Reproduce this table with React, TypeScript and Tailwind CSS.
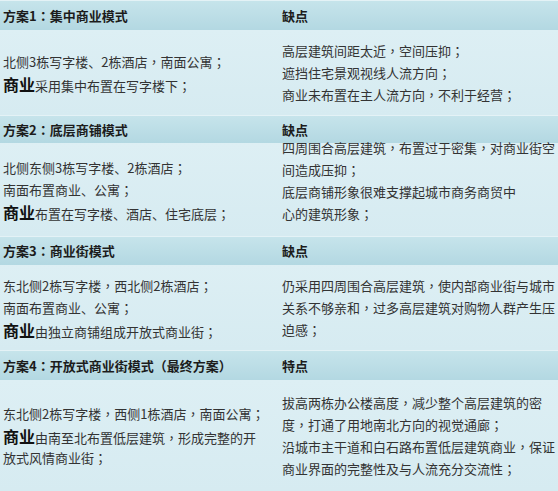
import React from "react";

const font = { fontFamily: '"Noto Sans CJK SC", "Noto Sans", sans-serif' };
const tcFont = { fontFamily: '"Noto Sans CJK TC", "Noto Sans CJK SC", sans-serif' };

function P({ s }: { s: string }) {
  const parts: React.ReactNode[] = [];
  let buf = "";
  let k = 0;
  for (const ch of s) {
    if (ch === "，" || ch === "：" || ch === "；") {
      if (buf) parts.push(buf);
      buf = "";
      parts.push(
        <span key={k++} style={tcFont}>
          {ch}
        </span>
      );
    } else buf += ch;
  }
  if (buf) parts.push(buf);
  return <>{parts}</>;
}

type Row = {
  h1: string;
  h2: string;
  hh: string;
  bh: string;
  left: React.ReactNode[];
  right: string[];
  rightTop?: boolean;
};

const B = ({ children }: { children: React.ReactNode }) => (
  <span className="text-[16px] font-bold text-[#111]">{children}</span>
);

const rows: Row[] = [
  {
    h1: "方案1：集中商业模式",
    h2: "缺点",
    hh: "h-[30px]",
    bh: "h-[85px]",
    left: [
      <P s="北侧3栋写字楼、2栋酒店，南面公寓；" />,
      <>
        <B>商业</B>
        <P s="采用集中布置在写字楼下；" />
      </>,
    ],
    right: [
      "高层建筑间距太近，空间压抑；",
      "遮挡住宅景观视线人流方向；",
      "商业未布置在主人流方向，不利于经营；",
    ],
  },
  {
    h1: "方案2：底层商铺模式",
    h2: "缺点",
    hh: "h-[28px]",
    bh: "h-[93px]",
    left: [
      <P s="北侧东侧3栋写字楼、2栋酒店；" />,
      <P s="南面布置商业、公寓；" />,
      <>
        <B>商业</B>
        <P s="布置在写字楼、酒店、住宅底层；" />
      </>,
    ],
    right: [
      "四周围合高层建筑，布置过于密集，对商业街空",
      "间造成压抑；",
      "底层商铺形象很难支撑起城市商务商贸中",
      "心的建筑形象；",
    ],
    rightTop: true,
  },
  {
    h1: "方案3：商业街模式",
    h2: "缺点",
    hh: "h-[29px]",
    bh: "h-[85px]",
    left: [
      <P s="东北侧2栋写字楼，西北侧2栋酒店；" />,
      <P s="南面布置商业、公寓；" />,
      <>
        <B>商业</B>
        <P s="由独立商铺组成开放式商业街；" />
      </>,
    ],
    right: [
      "仍采用四周围合高层建筑，使内部商业街与城市",
      "关系不够亲和，过多高层建筑对购物人群产生压",
      "迫感；",
    ],
  },
  {
    h1: "方案4：开放式商业街模式（最终方案）",
    h2: "特点",
    hh: "h-[30px]",
    bh: "h-[111px]",
    left: [
      <P s="东北侧2栋写字楼，西侧1栋酒店，南面公寓；" />,
      <>
        <B>商业</B>
        <P s="由南至北布置低层建筑，形成完整的开" />
      </>,
      <P s="放式风情商业街；" />,
    ],
    right: [
      "拔高两栋办公楼高度，减少整个高层建筑的密",
      "度，打通了用地南北方向的视觉通廊；",
      "沿城市主干道和白石路布置低层建筑商业，保证",
      "商业界面的完整性及与人流充分交流性；",
    ],
  },
];

export default function App() {
  return (
    <div
      className="w-[558px] h-[491px] overflow-hidden bg-[#daedf3] flex flex-col"
      style={font}
    >
      {rows.map((r, i) => (
        <div key={i} className="flex flex-col">
          <div
            className={`${r.hh} grid grid-cols-[279px_1fr] items-center bg-gradient-to-b from-[#c6e4eb] to-[#b3d8e2] border-t border-[#e4f2f6] text-[13px] font-bold text-[#1c1c1c]`}
          >
            <div className="pl-[3px] whitespace-nowrap">
              <P s={r.h1} />
            </div>
            <div className="pl-[3px]">{r.h2}</div>
          </div>
          <div
            className={`${r.bh} grid grid-cols-[279px_1fr] bg-gradient-to-b from-[#ddeff4] to-[#d6ebf1] text-[13px] text-[#333] leading-[22px]`}
          >
            <div className="pl-[3px] flex flex-col justify-center whitespace-nowrap">
              {r.left.map((l, j) => (
                <div key={j} className="h-[22px] leading-[22px]">
                  {l}
                </div>
              ))}
            </div>
            <div
              className={`pl-[3px] flex flex-col whitespace-nowrap ${
                r.rightTop ? "justify-start -mt-[6px]" : "justify-center"
              }`}
            >
              {r.right.map((l, j) => (
                <div key={j} className="h-[22px] leading-[22px]">
                  <P s={l} />
                </div>
              ))}
            </div>
          </div>
        </div>
      ))}
    </div>
  );
}
